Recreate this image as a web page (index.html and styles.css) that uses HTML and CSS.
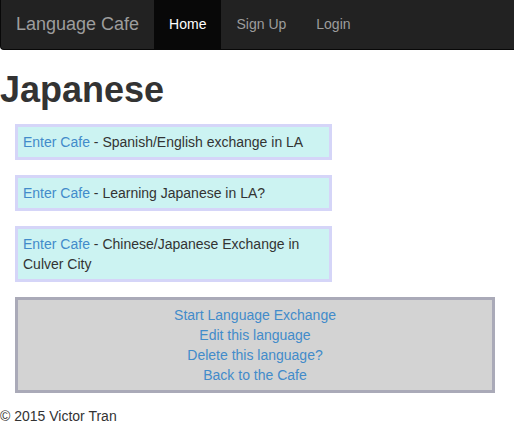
FILE: index.html
```html
<!DOCTYPE html>
<html>
<head>
<meta charset="utf-8">
<link rel="stylesheet" href="styles.css">
</head>
<body>
<nav class="navbar">
  <a class="brand" href="#">Language Cafe</a>
  <ul class="nav">
    <li class="active"><a href="#">Home</a></li>
    <li><a href="#">Sign Up</a></li>
    <li><a href="#">Login</a></li>
  </ul>
</nav>
<h1 class="title">Japanese</h1>
<div class="cafes">
  <p class="cafe"><a href="#">Enter Cafe</a> <span>- Spanish/English exchange in LA</span></p>
  <p class="cafe"><a href="#">Enter Cafe</a> <span>- Learning Japanese in LA?</span></p>
  <p class="cafe"><a href="#">Enter Cafe</a> <span>- Chinese/Japanese Exchange in</span><br><span>Culver City</span></p>
</div>
<div class="actions">
  <a href="#">Start Language Exchange</a>
  <a href="#">Edit this language</a>
  <a href="#">Delete this language?</a>
  <a href="#">Back to the Cafe</a>
</div>
<footer class="footer">© 2015 Victor Tran</footer>
</body>
</html>
```
FILE: styles.css
```css
* { box-sizing: border-box; }
html, body { margin: 0; padding: 0; }
body {
  font-family: "Liberation Sans", Arial, Helvetica, sans-serif;
  font-size: 14px;
  line-height: 20px;
  color: #333;
  background: #fff;
  overflow: hidden;
}
a { color: #428bca; text-decoration: none; }

.navbar {
  display: flex;
  align-items: stretch;
  height: 50px;
  background: #222;
  border: 1px solid #080808;
  border-top: none;
  border-right: none;
  border-radius: 0 0 0 4px;
  margin-bottom: 20px;
}
.brand {
  padding: 14px 15px;
  font-size: 18px;
  line-height: 20px;
  color: #9d9d9d;
}
.nav {
  display: flex;
  list-style: none;
  margin: 0;
  padding: 0;
}
.nav a {
  display: block;
  padding: 14px 15px;
  height: 49px;
  color: #9d9d9d;
  line-height: 20px;
}
.nav .active a {
  background: #080808;
  color: #fff;
}

.title {
  font-size: 36px;
  font-weight: 700;
  line-height: 40px;
  margin: 0 0 14px 0;
  color: #333;
}

.cafes {
  display: flex;
  flex-direction: column;
  gap: 15px;
  margin-left: 15px;
}
.cafe {
  margin: 0;
  width: 317px;
  border: 3px solid #d5d5f8;
  background: #ccf3f2;
  padding: 5px 5px;
}

.actions {
  margin: 15px 0 0 15px;
  width: 480px;
  border: 3px solid #aaaab8;
  background: #d3d3d3;
  padding: 5px;
  display: flex;
  flex-direction: column;
  align-items: center;
}

.footer {
  margin-top: 13px;
}
```
